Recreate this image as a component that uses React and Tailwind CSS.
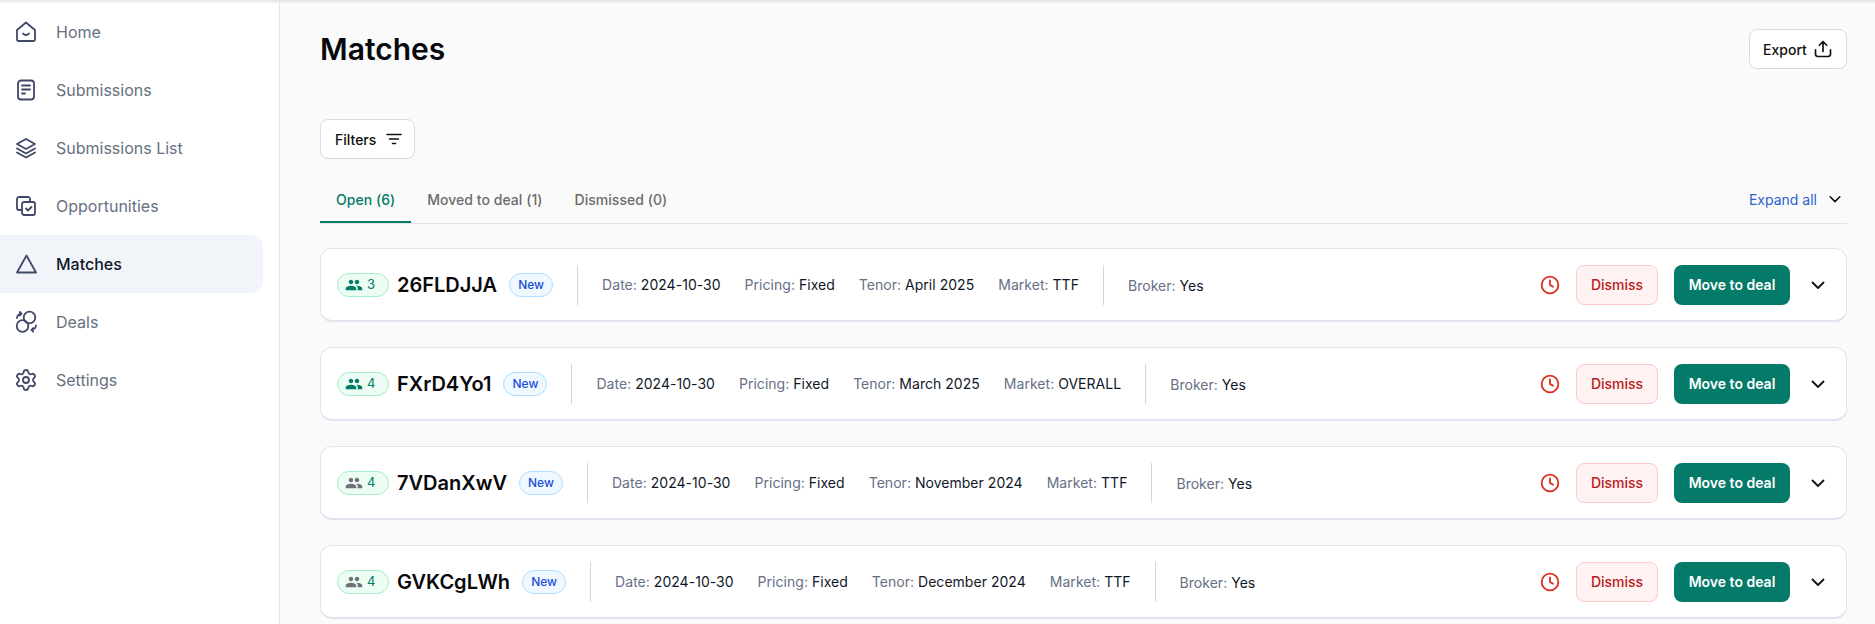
import { Settings } from "lucide-react";

const iconStroke = "#3f4868";

function Icon({ children }) {
    return (
        <svg viewBox="0 0 24 24" fill="none" stroke={iconStroke} strokeWidth="1.8" strokeLinecap="round" strokeLinejoin="round" className="h-6 w-6">
            {children}
        </svg>
    );
}

const navItems = [
    {
        label: "Home",
        icon: (
            <Icon>
                <path d="M3 10 12 2.500 21 10v9.500a1.500 1.500 0 0 1-1.500 1.500h-15A1.500 1.500 0 0 1 3 19.500z" />
                <path d="M9 13.500c1.500 2 4.500 2 6 0" />
            </Icon>
        ),
    },
    {
        label: "Submissions",
        icon: (
            <Icon>
                <rect x="4" y="2.500" width="16" height="19" rx="3" />
                <path d="M8 7.500h8M8 11.500h8M8 15.500h3" />
            </Icon>
        ),
    },
    {
        label: "Submissions List",
        icon: (
            <Icon>
                <path d="M12 3 3 8l9 5 9-5z" />
                <path d="m3 12.500 9 5 9-5" />
                <path d="m3 16.500 9 5 9-5" />
            </Icon>
        ),
    },
    {
        label: "Opportunities",
        icon: (
            <Icon>
                <path d="M16 7V5a2 2 0 0 0-2-2H5a2 2 0 0 0-2 2v9a2 2 0 0 0 2 2h2" />
                <rect x="8" y="8" width="13" height="13" rx="2" />
                <path d="m12 14.500 2 2 3.500-3.500" />
            </Icon>
        ),
    },
    {
        label: "Matches",
        active: true,
        icon: (
            <Icon>
                <path d="M12.500 3.500 3 20.500h19z" />
            </Icon>
        ),
    },
    {
        label: "Deals",
        icon: (
            <Icon>
                <circle cx="15.500" cy="7.500" r="5.800" />
                <circle cx="8.500" cy="16" r="5.800" />
                <path d="M3 8c.3-2.500 2-4 4.500-4.300M5.800 2l1.800 1.700L5.800 5.500" />
                <path d="M22 15.500c-.3 2.500-2 4-4.500 4.300M19.200 18l-1.700 1.800 1.700 1.700" />
            </Icon>
        ),
    },
    {
        label: "Settings",
        icon: <Settings size={24} strokeWidth={1.8} color={iconStroke} />,
    },
];

const matches = [
    { id: "26FLDJJA", count: 3, tenor: "April 2025", market: "TTF", green: true },
    { id: "FXrD4Yo1", count: 4, tenor: "March 2025", market: "OVERALL", green: true },
    { id: "7VDanXwV", count: 4, tenor: "November 2024", market: "TTF", green: false },
    { id: "GVKCgLWh", count: 4, tenor: "December 2024", market: "TTF", green: false },
];

function Chevron({ className = "w-4 h-4" }) {
    return (
        <svg viewBox="0 0 16 16" fill="none" stroke="#111" strokeWidth="1.800" strokeLinecap="round" strokeLinejoin="round" className={className}>
            <path d="m2.500 5.500 5.500 5.500 5.500-5.500" />
        </svg>
    );
}

function Field({ label, value }) {
    return (
        <span className="whitespace-nowrap text-[14px] tracking-[0.03px]">
            <span className="text-[#667085]">{label}: </span>
            <span className="text-[#101828]">{value}</span>
        </span>
    );
}

function MatchCard({ match }) {
    return (
        <div className="flex h-[74px] items-center rounded-xl border border-b-2 border-[#e3e3ef] bg-white pl-4 pr-5">
            <div className="flex h-6 w-[52px] items-center gap-1 rounded-full border border-[#a9ecc8] bg-[#ecfdf3] pl-[7px] text-[13px] text-[#047a68]">
                <svg viewBox="0 0 24 24" className="h-[18px] w-[18px]" fill={match.green ? "#047a68" : "#71717a"}>
                    <path d="M16 11c1.660 0 2.990-1.340 2.990-3S17.660 5 16 5c-1.660 0-3 1.340-3 3s1.340 3 3 3zm-8 0c1.660 0 2.990-1.340 2.990-3S9.660 5 8 5C6.340 5 5 6.340 5 8s1.340 3 3 3zm0 2c-2.330 0-7 1.170-7 3.500V19h14v-2.500c0-2.330-4.670-3.500-7-3.500zm8 0c-.290 0-.620.020-.970.050 1.160.840 1.970 1.970 1.970 3.450V19h6v-2.500c0-2.330-4.670-3.500-7-3.500z" />
                </svg>
                {match.count}
            </div>
            <span className="ml-2 text-[20px] font-semibold text-[#09090b]">{match.id}</span>
            <span className="ml-3 flex h-6 w-11 items-center justify-center rounded-full border border-[#b2ddff] bg-[#eff8ff] text-[12px] font-medium text-[#1d4ed8]">
                New
            </span>
            <div className="ml-6 h-10 w-px bg-[#d5d5e0]" />
            <div className="ml-6 flex items-center gap-6">
                <Field label="Date" value="2024-10-30" />
                <Field label="Pricing" value="Fixed" />
                <Field label="Tenor" value={match.tenor} />
                <Field label="Market" value={match.market} />
            </div>
            <div className="ml-6 h-10 w-px bg-[#d5d5e0]" />
            <div className="ml-6">
                <Field label="Broker" value="Yes" />
            </div>
            <svg viewBox="0 0 24 24" fill="none" stroke="#dc2f22" strokeWidth="2.200" strokeLinecap="round" strokeLinejoin="round" className="ml-auto h-5 w-5">
                <circle cx="12" cy="12" r="10" />
                <path d="M12 6.500V12l3.500 2" />
            </svg>
            <button className="ml-4 h-10 w-[82px] rounded-lg border border-[#fecaca] bg-[#fef2f2] text-[14px] font-medium text-[#b91c1c]">
                Dismiss
            </button>
            <button className="ml-4 h-10 w-[116px] rounded-lg bg-[#047a68] text-[14px] font-semibold text-white">
                Move to deal
            </button>
            <Chevron className="ml-5 h-4 w-4" />
        </div>
    );
}

export default function App() {
    return (
        <div className="relative flex h-screen overflow-hidden bg-[#fafafb] font-['Inter',sans-serif]">
            <div className="absolute inset-x-0 top-0 h-1 bg-gradient-to-b from-[#e4e4e7] to-transparent" />

            {/* Sidebar */}
            <aside className="flex w-[280px] shrink-0 flex-col border-r border-[#e3e3ef] bg-white pr-4 pt-[3px]">
                {navItems.map((item) => (
                    <a
                        key={item.label}
                        className={`flex h-[58px] items-center gap-[18px] rounded-r-xl pl-[14px] text-[16px] ${
                            item.active ? "bg-[#f1f4f8] font-medium text-[#101828]" : "text-[#667080]"
                        }`}
                    >
                        {item.icon}
                        {item.label}
                    </a>
                ))}
            </aside>

            {/* Main */}
            <main className="flex-1 pl-10 pr-7 pt-[29px]">
                <div className="flex items-start justify-between">
                    <h1 className="text-[30px] font-semibold leading-10 text-[#09090b]">Matches</h1>
                    <button className="flex h-10 w-[98px] items-center justify-center gap-[6px] rounded-lg border border-[#d9d9e8] bg-white text-[14px] font-medium text-[#101010]">
                        Export
                        <svg viewBox="0 0 24 24" fill="none" stroke="#111" strokeWidth="2" strokeLinecap="round" strokeLinejoin="round" className="h-5 w-5">
                            <path d="M3 13v5a3 3 0 0 0 3 3h12a3 3 0 0 0 3-3v-5" />
                            <path d="M12 15V3M7.500 7.500 12 3l4.500 4.500" />
                        </svg>
                    </button>
                </div>

                <button className="mt-[50px] flex h-10 w-[95px] items-center gap-[10px] rounded-lg border border-[#d9d9e8] bg-white pl-[14px] text-[14px] font-medium text-[#101010]">
                    Filters
                    <svg viewBox="0 0 16 12" fill="none" stroke="#111" strokeWidth="1.600" strokeLinecap="round" className="h-3 w-4">
                        <path d="M1 1.500h14M3.500 6h9M6.500 10.500h3" />
                    </svg>
                </button>

                {/* Tabs */}
                <div className="mt-5 flex h-[45px] items-stretch justify-between border-b border-[#e3e3ef] pb-1">
                    <div className="flex text-[14px] font-medium tracking-[0.04px]">
                        <span className="-mb-1 flex items-center border-b-2 border-[#047a68] px-4 pb-[2px] text-[#047a68]">Open (6)</span>
                        <span className="flex items-center px-4 text-[#6b6b6b]">Moved to deal (1)</span>
                        <span className="flex items-center px-4 text-[#6b6b6b]">Dismissed (0)</span>
                    </div>
                    <div className="flex items-center gap-[11px] pr-[5px] text-[14px] text-[#2a62cc]">
                        Expand all
                        <Chevron className="h-[14px] w-[14px]" />
                    </div>
                </div>

                <div className="mt-6 flex flex-col gap-[25px]">
                    {matches.map((match) => (
                        <MatchCard key={match.id} match={match} />
                    ))}
                </div>
            </main>
        </div>
    );
}
